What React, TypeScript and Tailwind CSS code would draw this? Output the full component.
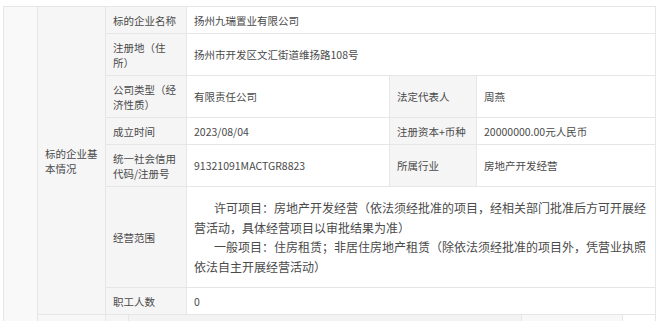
import React from 'react'

const label = 'bg-[#f5f5f5] border border-[#e6e6e6] px-[7px] align-middle leading-[15px]'
const value = 'bg-white border border-[#e6e6e6] px-[7px] align-middle leading-[15px]'

export default function App() {
  return (
    <div className="w-[660px] h-[321px] overflow-hidden bg-white pt-[6px] pl-[3px] text-[#4a4a4a] text-[10.5px] font-['Microsoft_YaHei','Noto_Sans_CJK_SC',sans-serif]">
      <table className="table-fixed border-collapse w-[652px]">
        <colgroup>
          <col className="w-[34px]" />
          <col className="w-[68px]" />
          <col className="w-[81px]" />
          <col className="w-[203px]" />
          <col className="w-[87px]" />
          <col className="w-[179px]" />
        </colgroup>
        <tbody>
          <tr className="h-[27px]">
            <td rowSpan={8} className="bg-[#f9f9f9] border border-[#e6e6e6]" />
            <td rowSpan={7} className="bg-[#f6f6f6] border border-[#e6e6e6] px-[7px] leading-[15px] align-middle">
              标的企业基本情况
            </td>
            <td className={label}>标的企业名称</td>
            <td colSpan={3} className={value}>扬州九瑞置业有限公司</td>
          </tr>
          <tr className="h-[42px]">
            <td className={label}>注册地（住所）</td>
            <td colSpan={3} className={value}>扬州市开发区文汇街道维扬路108号</td>
          </tr>
          <tr className="h-[42px]">
            <td className={label}>公司类型（经济性质）</td>
            <td className={value}>有限责任公司</td>
            <td className={label}>法定代表人</td>
            <td className={value}>周燕</td>
          </tr>
          <tr className="h-[27px]">
            <td className={label}>成立时间</td>
            <td className={value}>2023/08/04</td>
            <td className={label}>注册资本+币种</td>
            <td className={value}>20000000.00元人民币</td>
          </tr>
          <tr className="h-[42px]">
            <td className={label}>统一社会信用代码/注册号</td>
            <td className={value}>91321091MACTGR8823</td>
            <td className={label}>所属行业</td>
            <td className={value}>房地产开发经营</td>
          </tr>
          <tr className="h-[101px]">
            <td className={label}>经营范围</td>
            <td colSpan={3} className="bg-white border border-[#e6e6e6] pl-[7px] pr-[2px] align-middle text-[12px] leading-[19.5px]">
              <p className="indent-[20px]">许可项目：房地产开发经营（依法须经批准的项目，经相关部门批准后方可开展经营活动，具体经营项目以审批结果为准）</p>
              <p className="indent-[20px]">一般项目：住房租赁；非居住房地产租赁（除依法须经批准的项目外，凭营业执照依法自主开展经营活动）</p>
            </td>
          </tr>
          <tr className="h-[27px]">
            <td className={label}>职工人数</td>
            <td colSpan={3} className={value}>0</td>
          </tr>
          <tr className="h-[12px]">
            <td colSpan={5} className="p-0 border border-[#e6e6e6]">
              <div className="flex h-[12px]">
                <div className="w-[68px] bg-[#f7f7f7] border-r border-[#e6e6e6]" />
                <div className="w-[23px] bg-[#f5f5f5] border-r border-[#e6e6e6]" />
                <div className="w-[393px] bg-[#f3f3f3] border-r border-[#e6e6e6]" />
                <div className="w-[101px] bg-[#f8f8f8] border-r border-[#e6e6e6]" />
                <div className="flex-1 bg-white" />
              </div>
            </td>
          </tr>
        </tbody>
      </table>
    </div>
  )
}
